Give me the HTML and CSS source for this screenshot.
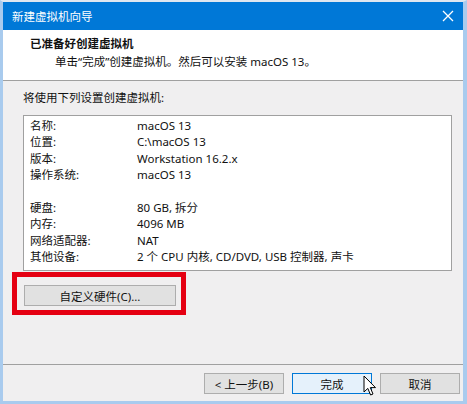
FILE: index.html
```html
<html lang="zh-CN">
<head>
  <meta charset="UTF-8">
  <title>新建虚拟机向导</title>
  <link rel="stylesheet" href="styles.css">
</head>
<body>
  <div class="window">
    <div class="titlebar">
      <span class="title">新建虚拟机向导</span>
      <svg class="close" width="12" height="12" viewBox="0 0 12 12">
        <path d="M1 1 L11 11 M11 1 L1 11" stroke="#ffffff" stroke-width="1.3" fill="none"/>
      </svg>
    </div>

    <div class="header">
      <div class="header-title">已准备好创建虚拟机</div>
      <div class="header-sub">单击“完成”创建虚拟机。然后可以安装 macOS 13。</div>
    </div>

    <div class="content">
      <div class="intro">将使用下列设置创建虚拟机:</div>
      <div class="summary">
        <div class="row"><span class="label">名称:</span><span>macOS 13</span></div>
        <div class="row"><span class="label">位置:</span><span>C:\macOS 13</span></div>
        <div class="row"><span class="label">版本:</span><span>Workstation 16.2.x</span></div>
        <div class="row"><span class="label">操作系统:</span><span>macOS 13</span></div>
        <div class="row"></div>
        <div class="row"><span class="label">硬盘:</span><span>80 GB, 拆分</span></div>
        <div class="row"><span class="label">内存:</span><span>4096 MB</span></div>
        <div class="row"><span class="label">网络适配器:</span><span>NAT</span></div>
        <div class="row"><span class="label">其他设备:</span><span>2 个 CPU 内核, CD/DVD, USB 控制器, 声卡</span></div>
      </div>
      <div class="highlight">
        <button class="btn btn-wide">自定义硬件(C)...</button>
      </div>
    </div>

    <div class="footer">
      <button class="btn">&lt; 上一步(B)</button>
      <button class="btn btn-default">完成</button>
      <button class="btn">取消</button>
    </div>
  </div>

  <!-- mouse pointer over the dialog -->
  <svg class="cursor" width="14" height="22" viewBox="0 0 14 22">
    <path d="M1 1 L1 17 L4.8 13.4 L7.6 20 L10 19 L7.3 12.6 L12.5 12.6 Z" fill="#ffffff" stroke="#000000" stroke-width="1" stroke-linejoin="round"/>
  </svg>
</body>
</html>
```

FILE: styles.css
```css
/* Dialog frame */
body {
  margin: 0;
  padding: 0;
  background-color: #a9cbee;
  font-family: "Noto Sans", "Noto Sans CJK SC", sans-serif;
  font-size: 11.5px;
  color: #111111;
}

.window {
  width: 467px;
  height: 404px;
  box-sizing: border-box;
  border-top: 2px solid #dfe7f0;
  border-left: 3px solid #a9cbee;
  border-right: 4px solid #a9cbee;
  border-bottom: 3px solid #a9cbee;
  background-color: #f0eff0;
  display: flex;
  flex-direction: column;
}

.titlebar {
  height: 28px;
  background-color: #0078d7;
  color: #ffffff;
  display: flex;
  align-items: center;
  justify-content: space-between;
  padding: 0 9px 0 9px;
  flex-shrink: 0;
}

.title {
  font-size: 11.5px;
}

/* Header */
.header {
  height: 51px;
  background-color: #ffffff;
  border-bottom: 1px solid #a0a0a0;
  box-sizing: border-box;
  padding-top: 5px;
  flex-shrink: 0;
}

.header-title {
  font-weight: bold;
  padding-left: 27px;
  line-height: 18px;
}

.header-sub {
  padding-left: 52px;
  line-height: 18px;
}

/* Content */
.content {
  flex: 1;
  padding: 8px 11px 0 20px;
  border-bottom: 1px solid #a0a0a0;
}

.intro {
  line-height: 17px;
  margin-bottom: 9px;
}

.summary {
  background-color: #ffffff;
  border: 1px solid #a0a0a0;
  height: 156px;
  box-sizing: border-box;
  padding: 2px 6px 0 6px;
}

.row {
  display: flex;
  height: 16.4px;
  line-height: 16.4px;
  white-space: nowrap;
}

.label {
  width: 107px;
}

.highlight {
  margin: 1px 0 0 -11px;
  width: 174px;
  height: 43px;
  box-sizing: border-box;
  border: 5px solid #e50012;
  padding: 8px 0 0 7px;
}

/* Buttons */
.btn {
  font-family: "Noto Sans", "Noto Sans CJK SC", sans-serif;
  font-size: 11.5px;
  color: #111111;
  background-color: #e1e1e1;
  border: 1px solid #adadad;
  height: 21px;
  width: 80px;
  padding: 0;
  margin: 0;
}

.btn-wide {
  width: 152px;
}

.btn-default {
  background-color: #e5f1fb;
  border: 1px solid #0078d7;
}

.footer {
  height: 36px;
  display: flex;
  justify-content: flex-end;
  gap: 8px;
  padding: 8px 3px 0 0;
  box-sizing: border-box;
  flex-shrink: 0;
}

.cursor {
  position: absolute;
  left: 363px;
  top: 375px;
}
```
